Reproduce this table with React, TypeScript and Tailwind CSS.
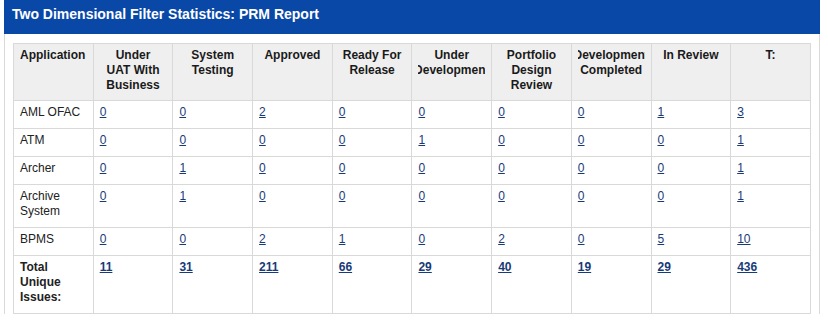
import React from 'react';

const columns: string[][] = [
  ['Application'],
  ['Under', 'UAT With', 'Business'],
  ['System', 'Testing'],
  ['Approved'],
  ['Ready For', 'Release'],
  ['Under', 'Development'],
  ['Portfolio', 'Design', 'Review'],
  ['Development', 'Completed'],
  ['In Review'],
  ['T:'],
];

const rows: { name: string[]; values: string[] }[] = [
  { name: ['AML OFAC'], values: ['0', '0', '2', '0', '0', '0', '0', '1', '3'] },
  { name: ['ATM'], values: ['0', '0', '0', '0', '1', '0', '0', '0', '1'] },
  { name: ['Archer'], values: ['0', '1', '0', '0', '0', '0', '0', '0', '1'] },
  { name: ['Archive', 'System'], values: ['0', '1', '0', '0', '0', '0', '0', '0', '1'] },
  { name: ['BPMS'], values: ['0', '0', '2', '1', '0', '2', '0', '5', '10'] },
];

const totals = ['11', '31', '211', '66', '29', '40', '19', '29', '436'];

const cell = 'border border-[#d9d9d9] p-0 align-top';

const App = () => {
  return (
    <div className="w-[828px] h-[320px] bg-white overflow-hidden font-['Liberation_Sans',Arial,sans-serif] text-[12px] leading-[15px] text-[#222]">
      <div className="ml-[4px] w-[816px]">
        <div className="h-[34px] bg-[#0a48a8] pl-[8px] pt-[6px] text-[14px] leading-[16px] font-bold text-white">
          Two Dimensional Filter Statistics: PRM Report
        </div>
        <div className="border-x border-[#d9d9d9] pt-[9px] px-[8px]">
          <table className="w-full table-fixed border-collapse">
            <thead>
              <tr className="bg-[#efefef]">
                {columns.map((lines, i) => (
                  <th key={i} className={`${cell} font-bold text-[#1a1a1a]`}>
                    <div className="pt-1 pb-[7px] mx-[6px] overflow-hidden">
                      {lines.map((l) => (
                        <div
                          key={l}
                          className={`flex whitespace-nowrap ${i === 0 ? 'justify-start' : 'justify-center'}`}
                        >
                          {l}
                        </div>
                      ))}
                    </div>
                  </th>
                ))}
              </tr>
            </thead>
            <tbody>
              {rows.map((r) => (
                <tr key={r.name.join(' ')}>
                  <td className={cell}>
                    <div className="pt-1 pb-[8px] px-[6px]">
                      {r.name.map((n) => (
                        <div key={n}>{n}</div>
                      ))}
                    </div>
                  </td>
                  {r.values.map((v, i) => (
                    <td key={i} className={cell}>
                      <div className="pt-1 pb-[8px] px-[6px]">
                        <a href="#" className="text-[#173a78] underline">
                          {v}
                        </a>
                      </div>
                    </td>
                  ))}
                </tr>
              ))}
              <tr>
                <td className={`${cell} font-bold`}>
                  <div className="pt-1 pb-[8px] px-[6px]">
                    <div>Total</div>
                    <div>Unique</div>
                    <div>Issues:</div>
                  </div>
                </td>
                {totals.map((v, i) => (
                  <td key={i} className={`${cell} font-bold`}>
                    <div className="pt-1 pb-[8px] px-[6px]">
                      <a href="#" className="text-[#173a78] underline">
                        {v}
                      </a>
                    </div>
                  </td>
                ))}
              </tr>
            </tbody>
          </table>
        </div>
      </div>
    </div>
  );
};

export default App;
